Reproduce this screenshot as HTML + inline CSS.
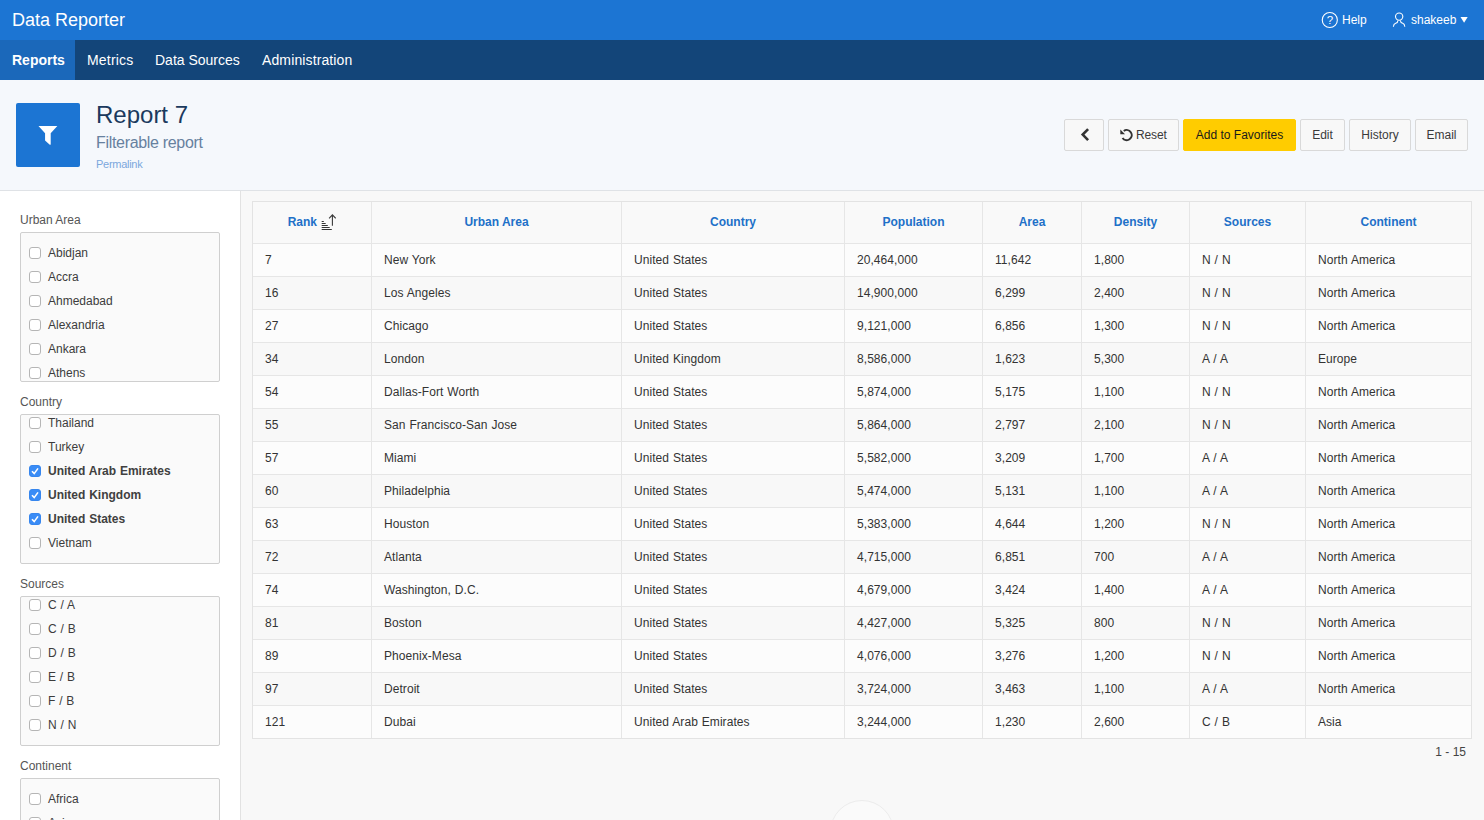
<!DOCTYPE html><html lang="en"><head><meta charset="utf-8"><title>Report 7</title><style>
*{box-sizing:border-box;margin:0;padding:0}
html,body{width:1484px;height:820px;overflow:hidden}
body{font-family:"Liberation Sans",sans-serif;font-size:12px;color:#333;background:#f8f8f8;position:relative}
.abs{position:absolute}
#hdr{position:absolute;left:0;top:0;width:1484px;height:40px;background:#1c75d3}
#logo{position:absolute;left:12px;top:0;line-height:40px;font-size:18px;color:#fff;white-space:nowrap}
#nav{position:absolute;left:0;top:40px;width:1484px;height:40px;background:#134579}
#nav a{position:absolute;top:0;height:40px;line-height:40px;font-size:14px;color:#fff;white-space:nowrap}
#nav .cur{left:0;width:75px;background:#1b68ba;font-weight:bold;padding-left:12px}
#hr a{position:absolute;top:0;line-height:40px;color:#fff;font-size:12px;white-space:nowrap}
#tbar{position:absolute;left:0;top:80px;width:1484px;height:111px;background:#f5f8fc;border-bottom:1px solid #dfe2e6}
#ico{position:absolute;left:16px;top:23px;width:64px;height:64px;background:#1c75d3;border-radius:2px}
#h1{position:absolute;left:96px;top:18px;font-size:24px;line-height:34px;color:#1b3a5e;white-space:nowrap}
#h2{position:absolute;left:96px;top:52px;font-size:16px;line-height:22px;letter-spacing:-0.32px;color:#67819f;white-space:nowrap}
#h3{position:absolute;left:96px;top:77px;font-size:11px;line-height:14px;letter-spacing:-0.28px;color:#7ba7dc;white-space:nowrap}
.btn{position:absolute;top:39px;height:32px;line-height:30px;border:1px solid #d9d9d9;border-radius:2px;background:#f8f8f8;color:#3a3a3a;font-size:12px;text-align:center;white-space:nowrap}
.btn.hot{background:#ffcc00;border-color:#ffcc00;color:#1a1a1a}
#side{position:absolute;left:0;top:191px;width:241px;height:629px;background:#fff;border-right:1px solid #e2e2e2}
.lbl{position:absolute;left:20px;font-size:12px;line-height:16px;color:#555;white-space:nowrap}
.box{position:absolute;left:20px;width:200px;height:150px;border:1px solid #cfcfcf;border-radius:2px;background:#fafafa;overflow:hidden}
.it{position:absolute;left:0;height:24px;width:198px;line-height:24px;white-space:nowrap;color:#3c3c3c}
.it .cb{position:absolute;left:8px;top:6px;width:12px;height:12px;border:1px solid #b5b5b5;border-radius:3px;background:#fff}
.it.on .cb{background:#3a8cf6;border-color:#3686ee}
.it .t{position:absolute;left:27px;top:0;word-spacing:0.5px}
.it.on .t{font-weight:bold;color:#404040}
#tbl{position:absolute;left:252px;top:201px;width:1220px;height:538px;border:1px solid #e3e3e3;background:#fcfcfc}
.th{position:absolute;top:0;height:41px;line-height:41px;text-align:center;color:#2170c8;font-weight:bold;font-size:12px;border-left:1px solid #e6e6e6;background:#f9f9f9;white-space:nowrap}
.tr{position:absolute;left:0;width:1218px;height:33px;border-top:1px solid #e6e6e6}
.tr.alt{background:#f8f8f8}
.td{letter-spacing:0.06px;word-spacing:0.5px;position:absolute;top:0;height:32px;line-height:32px;padding-left:12px;border-left:1px solid #e6e6e6;white-space:nowrap;color:#333}
#pg{position:absolute;right:18px;top:744px;line-height:16px;font-size:12px;color:#444}
#circ{position:absolute;left:830px;top:800px;width:64px;height:64px;border-radius:50%;border:1px solid #ececec;background:#fafafa}
</style></head><body>
<div id="hdr"><div id="logo">Data Reporter</div><div id="hr">
<svg class="abs" style="left:1321px;top:11px" width="18" height="18" viewBox="0 0 18 18"><circle cx="8.8" cy="9" r="7.55" fill="none" stroke="#fff" stroke-width="1.1"/><text x="8.85" y="13.35" font-size="11.5" fill="#fff" text-anchor="middle" font-family="Liberation Sans, sans-serif">?</text></svg>
<a style="left:1342px">Help</a>
<svg class="abs" style="left:1392px;top:12px" width="15" height="17" viewBox="0 0 15 17"><circle cx="7.16" cy="4.6" r="3.65" fill="none" stroke="#fff" stroke-width="1.1"/><path d="M5.95 8.5 C5.9 10.5 4.9 10.9 3.7 11.25 C2.1 11.7 1.5 13.2 1.36 14.8 M8.37 8.5 C8.4 10.5 9.5 10.9 10.7 11.25 C12.2 11.7 12.7 13.2 12.8 14.8" fill="none" stroke="#fff" stroke-width="1.1"/></svg>
<a style="left:1411px">shakeeb</a>
<svg class="abs" style="left:1459px;top:16px" width="10" height="8" viewBox="0 0 10 8"><path d="M1.5 1.1 L8.7 1.1 L5.1 6.7 Z" fill="#fff"/></svg>
</div></div>
<div id="nav"><a class="cur">Reports</a><a style="left:87px;letter-spacing:0.19px">Metrics</a><a style="left:155px">Data Sources</a><a style="left:262px;letter-spacing:0.12px">Administration</a></div>
<div id="tbar"><div id="ico"><svg class="abs" style="left:22px;top:22px" width="20" height="20" viewBox="0 0 20 20"><path d="M0.5 0.95 L19.35 0.95 L12.7 8.3 L12.7 19.3 Q12.6 20.1 11.8 19.75 L7.07 15.6 L7.07 8.3 Z" fill="#fff"/></svg></div>
<div id="h1">Report 7</div><div id="h2">Filterable report</div><div id="h3">Permalink</div>
<div class="btn" style="left:1064px;width:40px"><svg class="abs" style="left:15px;top:7px" width="12" height="16" viewBox="0 0 12 16"><path d="M8.1 2.1 L2.7 7.6 L8.1 13.1" fill="none" stroke="#333" stroke-width="2.6"/></svg></div>
<div class="btn" style="left:1108px;width:71px"><svg class="abs" style="left:11px;top:9px" width="13" height="13" viewBox="0 0 13 13"><path d="M3.76 1.97 A5.04 5.04 0 1 1 2.52 8.99" fill="none" stroke="#333" stroke-width="2"/><path d="M0.3 0.5 L0.3 5.2 L5 5.2 Z" fill="#333"/></svg><span class="abs" style="left:27px;top:0;letter-spacing:-0.15px">Reset</span></div>
<div class="btn hot" style="left:1183px;width:113px">Add to Favorites</div>
<div class="btn" style="left:1300px;width:45px">Edit</div>
<div class="btn" style="left:1349px;width:62px">History</div>
<div class="btn" style="left:1415px;width:53px">Email</div>
</div>
<div id="side">
<div class="lbl" style="top:21px">Urban Area</div><div class="box" style="top:41px">
<div class="it" style="top:8px"><span class="cb"></span><span class="t">Abidjan</span></div>
<div class="it" style="top:32px"><span class="cb"></span><span class="t">Accra</span></div>
<div class="it" style="top:56px"><span class="cb"></span><span class="t">Ahmedabad</span></div>
<div class="it" style="top:80px"><span class="cb"></span><span class="t">Alexandria</span></div>
<div class="it" style="top:104px"><span class="cb"></span><span class="t">Ankara</span></div>
<div class="it" style="top:128px"><span class="cb"></span><span class="t">Athens</span></div>
</div>
<div class="lbl" style="top:203px">Country</div><div class="box" style="top:223px">
<div class="it" style="top:-4px"><span class="cb"></span><span class="t">Thailand</span></div>
<div class="it" style="top:20px"><span class="cb"></span><span class="t">Turkey</span></div>
<div class="it on" style="top:44px"><span class="cb"></span><svg class="abs" style="left:9px;top:7px" width="10" height="10" viewBox="0 0 10 10"><path d="M2 5.2 L4.2 7.6 L8 2.4" fill="none" stroke="#fff" stroke-width="1.6"/></svg><span class="t">United Arab Emirates</span></div>
<div class="it on" style="top:68px"><span class="cb"></span><svg class="abs" style="left:9px;top:7px" width="10" height="10" viewBox="0 0 10 10"><path d="M2 5.2 L4.2 7.6 L8 2.4" fill="none" stroke="#fff" stroke-width="1.6"/></svg><span class="t">United Kingdom</span></div>
<div class="it on" style="top:92px"><span class="cb"></span><svg class="abs" style="left:9px;top:7px" width="10" height="10" viewBox="0 0 10 10"><path d="M2 5.2 L4.2 7.6 L8 2.4" fill="none" stroke="#fff" stroke-width="1.6"/></svg><span class="t">United States</span></div>
<div class="it" style="top:116px"><span class="cb"></span><span class="t">Vietnam</span></div>
</div>
<div class="lbl" style="top:385px">Sources</div><div class="box" style="top:405px">
<div class="it" style="top:-4px"><span class="cb"></span><span class="t">C / A</span></div>
<div class="it" style="top:20px"><span class="cb"></span><span class="t">C / B</span></div>
<div class="it" style="top:44px"><span class="cb"></span><span class="t">D / B</span></div>
<div class="it" style="top:68px"><span class="cb"></span><span class="t">E / B</span></div>
<div class="it" style="top:92px"><span class="cb"></span><span class="t">F / B</span></div>
<div class="it" style="top:116px"><span class="cb"></span><span class="t">N / N</span></div>
</div>
<div class="lbl" style="top:567px">Continent</div><div class="box" style="top:587px">
<div class="it" style="top:8px"><span class="cb"></span><span class="t">Africa</span></div>
<div class="it" style="top:32px"><span class="cb"></span><span class="t">Asia</span></div>
</div>
</div>
<div id="tbl">
<div class="th" style="border-left:0;left:0px;width:118px">Rank <svg width="16" height="17" viewBox="0 0 16 17" style="vertical-align:-5px"><path d="M1.7 7.5h2.1M1.7 9.5h4M1.7 11.5h6.1M1.7 13.5h8M1.7 15.5h10.1" stroke="#333" stroke-width="1" fill="none"/><path d="M12.4 11.8V0.9M9.1 4.3L12.4 0.8L15.7 4.3" stroke="#3a3a3a" stroke-width="1.1" fill="none"/></svg></div>
<div class="th" style="left:118px;width:250px">Urban Area</div>
<div class="th" style="left:368px;width:223px">Country</div>
<div class="th" style="left:591px;width:138px">Population</div>
<div class="th" style="left:729px;width:99px">Area</div>
<div class="th" style="left:828px;width:108px">Density</div>
<div class="th" style="left:936px;width:116px">Sources</div>
<div class="th" style="left:1052px;width:166px">Continent</div>
<div class="tr" style="top:41px">
<div class="td" style="border-left:0;left:0px;width:118px">7</div>
<div class="td" style="left:118px;width:250px">New York</div>
<div class="td" style="left:368px;width:223px">United States</div>
<div class="td" style="left:591px;width:138px">20,464,000</div>
<div class="td" style="left:729px;width:99px">11,642</div>
<div class="td" style="left:828px;width:108px">1,800</div>
<div class="td" style="left:936px;width:116px">N / N</div>
<div class="td" style="left:1052px;width:167px">North America</div>
</div>
<div class="tr alt" style="top:74px">
<div class="td" style="border-left:0;left:0px;width:118px">16</div>
<div class="td" style="left:118px;width:250px">Los Angeles</div>
<div class="td" style="left:368px;width:223px">United States</div>
<div class="td" style="left:591px;width:138px">14,900,000</div>
<div class="td" style="left:729px;width:99px">6,299</div>
<div class="td" style="left:828px;width:108px">2,400</div>
<div class="td" style="left:936px;width:116px">N / N</div>
<div class="td" style="left:1052px;width:167px">North America</div>
</div>
<div class="tr" style="top:107px">
<div class="td" style="border-left:0;left:0px;width:118px">27</div>
<div class="td" style="left:118px;width:250px">Chicago</div>
<div class="td" style="left:368px;width:223px">United States</div>
<div class="td" style="left:591px;width:138px">9,121,000</div>
<div class="td" style="left:729px;width:99px">6,856</div>
<div class="td" style="left:828px;width:108px">1,300</div>
<div class="td" style="left:936px;width:116px">N / N</div>
<div class="td" style="left:1052px;width:167px">North America</div>
</div>
<div class="tr alt" style="top:140px">
<div class="td" style="border-left:0;left:0px;width:118px">34</div>
<div class="td" style="left:118px;width:250px">London</div>
<div class="td" style="left:368px;width:223px">United Kingdom</div>
<div class="td" style="left:591px;width:138px">8,586,000</div>
<div class="td" style="left:729px;width:99px">1,623</div>
<div class="td" style="left:828px;width:108px">5,300</div>
<div class="td" style="left:936px;width:116px">A / A</div>
<div class="td" style="left:1052px;width:167px">Europe</div>
</div>
<div class="tr" style="top:173px">
<div class="td" style="border-left:0;left:0px;width:118px">54</div>
<div class="td" style="left:118px;width:250px">Dallas-Fort Worth</div>
<div class="td" style="left:368px;width:223px">United States</div>
<div class="td" style="left:591px;width:138px">5,874,000</div>
<div class="td" style="left:729px;width:99px">5,175</div>
<div class="td" style="left:828px;width:108px">1,100</div>
<div class="td" style="left:936px;width:116px">N / N</div>
<div class="td" style="left:1052px;width:167px">North America</div>
</div>
<div class="tr alt" style="top:206px">
<div class="td" style="border-left:0;left:0px;width:118px">55</div>
<div class="td" style="left:118px;width:250px">San Francisco-San Jose</div>
<div class="td" style="left:368px;width:223px">United States</div>
<div class="td" style="left:591px;width:138px">5,864,000</div>
<div class="td" style="left:729px;width:99px">2,797</div>
<div class="td" style="left:828px;width:108px">2,100</div>
<div class="td" style="left:936px;width:116px">N / N</div>
<div class="td" style="left:1052px;width:167px">North America</div>
</div>
<div class="tr" style="top:239px">
<div class="td" style="border-left:0;left:0px;width:118px">57</div>
<div class="td" style="left:118px;width:250px">Miami</div>
<div class="td" style="left:368px;width:223px">United States</div>
<div class="td" style="left:591px;width:138px">5,582,000</div>
<div class="td" style="left:729px;width:99px">3,209</div>
<div class="td" style="left:828px;width:108px">1,700</div>
<div class="td" style="left:936px;width:116px">A / A</div>
<div class="td" style="left:1052px;width:167px">North America</div>
</div>
<div class="tr alt" style="top:272px">
<div class="td" style="border-left:0;left:0px;width:118px">60</div>
<div class="td" style="left:118px;width:250px">Philadelphia</div>
<div class="td" style="left:368px;width:223px">United States</div>
<div class="td" style="left:591px;width:138px">5,474,000</div>
<div class="td" style="left:729px;width:99px">5,131</div>
<div class="td" style="left:828px;width:108px">1,100</div>
<div class="td" style="left:936px;width:116px">A / A</div>
<div class="td" style="left:1052px;width:167px">North America</div>
</div>
<div class="tr" style="top:305px">
<div class="td" style="border-left:0;left:0px;width:118px">63</div>
<div class="td" style="left:118px;width:250px">Houston</div>
<div class="td" style="left:368px;width:223px">United States</div>
<div class="td" style="left:591px;width:138px">5,383,000</div>
<div class="td" style="left:729px;width:99px">4,644</div>
<div class="td" style="left:828px;width:108px">1,200</div>
<div class="td" style="left:936px;width:116px">N / N</div>
<div class="td" style="left:1052px;width:167px">North America</div>
</div>
<div class="tr alt" style="top:338px">
<div class="td" style="border-left:0;left:0px;width:118px">72</div>
<div class="td" style="left:118px;width:250px">Atlanta</div>
<div class="td" style="left:368px;width:223px">United States</div>
<div class="td" style="left:591px;width:138px">4,715,000</div>
<div class="td" style="left:729px;width:99px">6,851</div>
<div class="td" style="left:828px;width:108px">700</div>
<div class="td" style="left:936px;width:116px">A / A</div>
<div class="td" style="left:1052px;width:167px">North America</div>
</div>
<div class="tr" style="top:371px">
<div class="td" style="border-left:0;left:0px;width:118px">74</div>
<div class="td" style="left:118px;width:250px">Washington, D.C.</div>
<div class="td" style="left:368px;width:223px">United States</div>
<div class="td" style="left:591px;width:138px">4,679,000</div>
<div class="td" style="left:729px;width:99px">3,424</div>
<div class="td" style="left:828px;width:108px">1,400</div>
<div class="td" style="left:936px;width:116px">A / A</div>
<div class="td" style="left:1052px;width:167px">North America</div>
</div>
<div class="tr alt" style="top:404px">
<div class="td" style="border-left:0;left:0px;width:118px">81</div>
<div class="td" style="left:118px;width:250px">Boston</div>
<div class="td" style="left:368px;width:223px">United States</div>
<div class="td" style="left:591px;width:138px">4,427,000</div>
<div class="td" style="left:729px;width:99px">5,325</div>
<div class="td" style="left:828px;width:108px">800</div>
<div class="td" style="left:936px;width:116px">N / N</div>
<div class="td" style="left:1052px;width:167px">North America</div>
</div>
<div class="tr" style="top:437px">
<div class="td" style="border-left:0;left:0px;width:118px">89</div>
<div class="td" style="left:118px;width:250px">Phoenix-Mesa</div>
<div class="td" style="left:368px;width:223px">United States</div>
<div class="td" style="left:591px;width:138px">4,076,000</div>
<div class="td" style="left:729px;width:99px">3,276</div>
<div class="td" style="left:828px;width:108px">1,200</div>
<div class="td" style="left:936px;width:116px">N / N</div>
<div class="td" style="left:1052px;width:167px">North America</div>
</div>
<div class="tr alt" style="top:470px">
<div class="td" style="border-left:0;left:0px;width:118px">97</div>
<div class="td" style="left:118px;width:250px">Detroit</div>
<div class="td" style="left:368px;width:223px">United States</div>
<div class="td" style="left:591px;width:138px">3,724,000</div>
<div class="td" style="left:729px;width:99px">3,463</div>
<div class="td" style="left:828px;width:108px">1,100</div>
<div class="td" style="left:936px;width:116px">A / A</div>
<div class="td" style="left:1052px;width:167px">North America</div>
</div>
<div class="tr" style="top:503px">
<div class="td" style="border-left:0;left:0px;width:118px">121</div>
<div class="td" style="left:118px;width:250px">Dubai</div>
<div class="td" style="left:368px;width:223px">United Arab Emirates</div>
<div class="td" style="left:591px;width:138px">3,244,000</div>
<div class="td" style="left:729px;width:99px">1,230</div>
<div class="td" style="left:828px;width:108px">2,600</div>
<div class="td" style="left:936px;width:116px">C / B</div>
<div class="td" style="left:1052px;width:167px">Asia</div>
</div>
</div>
<div id="pg">1 - 15</div><div id="circ"></div>
</body></html>
